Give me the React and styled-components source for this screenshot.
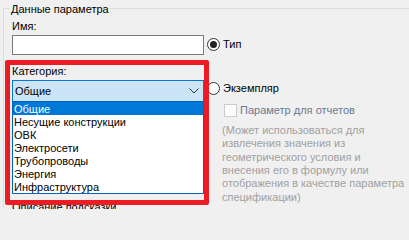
import React from 'react';
import styled, { createGlobalStyle } from 'styled-components';

const CATEGORIES = [
  'Общие',
  'Несущие конструкции',
  'ОВК',
  'Электросети',
  'Трубопроводы',
  'Энергия',
  'Инфраструктура',
];

const HINT = [
  '(Может использоваться для',
  'извлечения значения из',
  'геометрического условия и',
  'внесения его в формулу или',
  'отображения в качестве параметра',
  'спецификации)',
];

const GlobalStyle = createGlobalStyle`
  html, body {
    margin: 0;
    padding: 0;
    background: #f0f0f0;
  }
  body {
    font-family: "Liberation Sans", Arial, sans-serif;
    font-size: 11px;
    color: #000;
  }
`;

const Page = styled.div`
  position: relative;
  width: 409px;
  height: 209px;
  overflow: hidden;
  background: #f0f0f0;
`;

const Group = styled.fieldset`
  margin: 0 1px 0 3px;
  padding: 1px 8px 0;
  border: 1px solid #dcdcdc;
  border-bottom: none;
  height: 260px;
  box-sizing: border-box;
`;

const Legend = styled.legend`
  margin-left: -2px;
  padding: 2px 1px 0;
  line-height: 14px;
`;

const Columns = styled.div`
  display: grid;
  grid-template-columns: 192px 1fr;
  column-gap: 3px;
`;

const Column = styled.div`
  position: relative;
  display: flex;
  flex-direction: column;
`;

const Label = styled.div`
  padding-top: 2px;
  line-height: 15px;
  margin-top: ${p => p.$gap || 0}px;
  white-space: nowrap;
`;

const TextInput = styled.div`
  margin-top: 1px;
  height: 20px;
  box-sizing: border-box;
  border: 1px solid #7a7a7a;
  background: #fff;
`;

const Select = styled.div`
  margin-top: 1px;
  height: 22px;
  box-sizing: border-box;
  border: 1px solid #0078d7;
  background: #cce4f7;
  display: flex;
  align-items: center;
  justify-content: space-between;
  padding: 0 4px 0 2px;
  line-height: 15px;
`;

const Chevron = () => (
  <svg width="10" height="6" viewBox="0 0 10 6">
    <path d="M0.5 0.5 L5 5 L9.5 0.5" fill="none" stroke="#333" strokeWidth="1" />
  </svg>
);

const DropList = styled.ul`
  position: absolute;
  left: 0;
  top: 84px;
  width: 192px;
  margin: 0;
  padding: 0;
  list-style: none;
  box-sizing: border-box;
  border: 1px solid #0064b8;
  background: #fff;
  z-index: 2;
`;

const Option = styled.li`
  height: 12px;
  padding: 1px 0 0 1px;
  line-height: 13px;
  white-space: nowrap;
  background: ${p => (p.$active ? '#0078d7' : 'transparent')};
  color: ${p => (p.$active ? '#fff' : '#000')};
`;

const Choice = styled.label`
  display: flex;
  align-items: center;
  height: 15px;
  line-height: 15px;
  margin-top: ${p => p.$gap}px;
  padding-left: ${p => p.$indent || 0}px;
  white-space: nowrap;
  color: ${p => (p.$disabled ? '#6b7a90' : '#000')};
`;

const Radio = styled.span`
  width: 13px;
  height: 13px;
  box-sizing: border-box;
  border: 1px solid #333;
  border-radius: 50%;
  background: #fff;
  margin-right: 3px;
  display: flex;
  align-items: center;
  justify-content: center;

  &::after {
    content: '';
    width: 7px;
    height: 7px;
    border-radius: 50%;
    background: ${p => (p.$checked ? '#222' : 'transparent')};
  }
`;

const Checkbox = styled.span`
  width: 13px;
  height: 13px;
  box-sizing: border-box;
  border: 1px solid #cccccc;
  background: #fcfcfc;
  margin-right: 3px;
`;

const Hint = styled.div`
  margin-top: 6px;
  padding-left: 15px;
  line-height: 13.33px;
  color: #a0a0a0;
  white-space: nowrap;
`;

const Highlight = styled.div`
  position: absolute;
  left: 5px;
  top: 60px;
  width: 204px;
  height: 145px;
  box-sizing: border-box;
  border: 5px solid #ed1c24;
  border-radius: 2px;
  z-index: 3;
`;

const App = () => (
  <Page>
    <GlobalStyle />
    <Group>
      <Legend>Данные параметра</Legend>
      <Columns>
        <Column>
          <Label>Имя:</Label>
          <TextInput />
          <Label $gap={7}>Категория:</Label>
          <Select>
            <span>Общие</span>
            <Chevron />
          </Select>
          <DropList>
            {CATEGORIES.map((c, i) => (
              <Option key={c} $active={i === 0}>{c}</Option>
            ))}
          </DropList>
          <Label $gap={96}>Описание подсказки</Label>
        </Column>
        <Column>
          <Choice $gap={20}>
            <Radio $checked />
            Тип
          </Choice>
          <Choice $gap={29}>
            <Radio />
            Экземпляр
          </Choice>
          <Choice $gap={7} $indent={17} $disabled>
            <Checkbox />
            Параметр для отчетов
          </Choice>
          <Hint>
            {HINT.map(line => (
              <div key={line}>{line}</div>
            ))}
          </Hint>
        </Column>
      </Columns>
    </Group>
    <Highlight />
  </Page>
);

export default App;
